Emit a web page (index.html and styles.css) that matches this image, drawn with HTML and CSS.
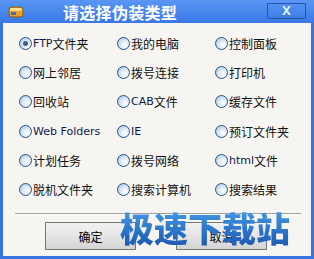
FILE: index.html
```html
<!DOCTYPE html>
<html lang="zh-CN">
<head>
  <meta charset="UTF-8" />
  <title>请选择伪装类型</title>
  <link rel="stylesheet" href="styles.css">
</head>
<body>
  <div class="window">
    <div class="titlebar">
      <svg class="app-icon" width="16" height="14" viewBox="0 0 16 14">
        <rect x="1" y="2" width="14" height="10" rx="3" fill="#e8a020" stroke="#8a5a10" stroke-width="1"/>
        <rect x="2" y="3" width="12" height="3" rx="1.5" fill="#ffe08a"/>
        <rect x="3" y="7" width="5" height="3" fill="#4a6ab8"/>
      </svg>
      <span class="title">请选择伪装类型</span>
      <div class="close-btn">X</div>
    </div>
    <div class="client">
      <div class="options">
        <label class="opt"><span class="radio checked"></span><span class="lat">FTP</span>文件夹</label>
        <label class="opt"><span class="radio"></span>我的电脑</label>
        <label class="opt"><span class="radio"></span>控制面板</label>
        <label class="opt"><span class="radio"></span>网上邻居</label>
        <label class="opt"><span class="radio"></span>拨号连接</label>
        <label class="opt"><span class="radio"></span>打印机</label>
        <label class="opt"><span class="radio"></span>回收站</label>
        <label class="opt"><span class="radio"></span><span class="lat">CAB</span>文件</label>
        <label class="opt"><span class="radio"></span>缓存文件</label>
        <label class="opt"><span class="radio"></span><span class="lat">Web Folders</span></label>
        <label class="opt"><span class="radio"></span><span class="lat">IE</span></label>
        <label class="opt"><span class="radio"></span>预订文件夹</label>
        <label class="opt"><span class="radio"></span>计划任务</label>
        <label class="opt"><span class="radio"></span>拨号网络</label>
        <label class="opt"><span class="radio"></span><span class="lat">html</span>文件</label>
        <label class="opt"><span class="radio"></span>脱机文件夹</label>
        <label class="opt"><span class="radio"></span>搜索计算机</label>
        <label class="opt"><span class="radio"></span>搜索结果</label>
      </div>
      <div class="separator"></div>
      <div class="btn-group">
        <button class="btn">确定</button>
        <button class="btn">取消</button>
      </div>
      <div class="watermark">极速下载站</div>
    </div>
  </div>
</body>
</html>
```

FILE: styles.css
```css
body {
  margin: 0;
  font-family: "DejaVu Sans", "Noto Sans CJK SC", sans-serif;
}
.window {
  width: 314px;
  height: 259px;
  box-sizing: border-box;
  background: #3574e2;
  display: flex;
  flex-direction: column;
  padding: 0 3px 3px 3px;
}
.titlebar {
  height: 23px;
  flex: none;
  display: flex;
  align-items: center;
  background: linear-gradient(#5a96f2, #4484ec 60%, #3a78e6);
  margin: 0 -3px;
  padding: 0 8px;
}
.app-icon {
  flex: none;
}
.title {
  margin-left: 39px;
  color: #fff;
  font-family: "Noto Sans CJK SC", sans-serif;
  font-weight: bold;
  font-size: 16px;
  letter-spacing: 0.3px;
}
.close-btn {
  margin-left: auto;
  margin-right: 0;
  width: 39px;
  height: 16px;
  margin-top: -2px;
  border: 1px solid #2456b0;
  border-radius: 0 0 2px 2px;
  box-sizing: border-box;
  color: #dff0ff;
  font-family: "DejaVu Sans", sans-serif;
  font-weight: bold;
  font-size: 12px;
  text-align: center;
  line-height: 14px;
  text-shadow: 0 0 1px #1e4ea8;
}
.client {
  flex: 1;
  background: #f6f5f1;
  position: relative;
  display: flex;
  flex-direction: column;
}
.options {
  display: grid;
  grid-template-columns: 98px 98px 1fr;
  grid-auto-rows: 29.2px;
  padding: 6px 0 0 16px;
}
.opt {
  display: flex;
  align-items: center;
  font-family: "Noto Sans CJK SC", sans-serif;
  font-size: 12px;
  color: #111;
}
.lat {
  font-family: "DejaVu Sans", sans-serif;
  font-size: 11px;
  color: #101850;
}
.radio {
  width: 11px;
  height: 11px;
  border: 1px solid #2a5580;
  border-radius: 50%;
  background: radial-gradient(circle at 65% 65%, #fff 0, #dbe8f4 45%, #9cbcd8 100%);
  margin-right: 1px;
  position: relative;
  flex: none;
}
.radio.checked::after {
  content: "";
  position: absolute;
  left: 3px;
  top: 3px;
  width: 5px;
  height: 5px;
  border-radius: 50%;
  background: #3a5f8a;
}
.separator {
  margin: 9px 10px 0 12px;
  border-top: 1px solid #a0a0a0;
  border-bottom: 1px solid #fff;
}
.btn-group {
  display: flex;
  gap: 40px;
  padding: 7px 0 0 42px;
}
.btn {
  width: 91px;
  height: 28px;
  border: 1px solid #767676;
  background: linear-gradient(#f2f2f2, #e2e2e2 60%, #d4d4d4);
  font-family: "Noto Sans CJK SC", sans-serif;
  font-size: 12px;
  color: #000;
  padding: 0;
}
.watermark {
  position: absolute;
  left: 117px;
  top: 181px;
  font-family: "Noto Sans CJK SC", sans-serif;
  font-weight: 900;
  font-size: 34px;
  line-height: 48px;
  background: linear-gradient(#4aa4ec, #2468c0 70%, #1c52a6);
  -webkit-background-clip: text;
  background-clip: text;
  color: transparent;
}
```
